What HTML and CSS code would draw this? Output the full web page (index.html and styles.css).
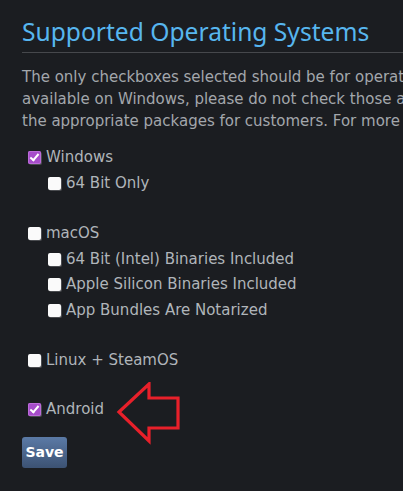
FILE: index.html
```html
<!DOCTYPE html>
<html lang="en">
<head>
    <meta charset="UTF-8">
    <meta name="viewport" content="width=device-width, initial-scale=1.0">
    <title>Supported Operating Systems</title>
    <link rel="stylesheet" href="styles.css">
</head>
<body>
    <div class="section">
        <h1>Supported Operating Systems</h1>
        <p class="intro">
            The only checkboxes selected should be for operating systems your product fully supports. If features are not<br>
            available on Windows, please do not check those additional platforms. This helps Steam deliver<br>
            the appropriate packages for customers. For more information, see the documentation.
        </p>

        <form class="os-list">
            <div class="os-group">
                <label class="check"><input type="checkbox" checked> Windows</label>
                <label class="check sub"><input type="checkbox"> 64 Bit Only</label>
            </div>
            <div class="os-group">
                <label class="check"><input type="checkbox"> macOS</label>
                <label class="check sub"><input type="checkbox"> 64 Bit (Intel) Binaries Included</label>
                <label class="check sub"><input type="checkbox"> Apple Silicon Binaries Included</label>
                <label class="check sub"><input type="checkbox"> App Bundles Are Notarized</label>
            </div>
            <div class="os-group linux">
                <label class="check"><input type="checkbox"> Linux + SteamOS</label>
            </div>
            <div class="os-group last">
                <label class="check"><input type="checkbox" checked> Android</label>
                <svg class="arrow" width="66" height="64" viewBox="0 0 66 64">
                    <polygon points="3,30 33,2 33,16 62,16 62,46 33,46 33,59" fill="none" stroke="#e8202a" stroke-width="3.2" stroke-linejoin="miter"/>
                </svg>
            </div>
            <button type="button" class="save">Save</button>
        </form>
    </div>
</body>
</html>
```
FILE: styles.css
```css
* {
    margin: 0;
    padding: 0;
    box-sizing: border-box;
}
html, body {
    overflow: hidden;
}
body {
    font-family: 'DejaVu Sans', sans-serif;
    background: #1b1d21;
    color: #a3a7ac;
    width: 403px;
    height: 491px;
}
.section {
    width: 900px;
    padding: 17.5px 0 0 22px;
}
h1 {
    font-family: 'Noto Sans', sans-serif;
    font-weight: normal;
    font-size: 24.6px;
    line-height: 27px;
    color: #57b6ef;
    padding-bottom: 7.5px;
    border-bottom: 1px solid #46484c;
    margin-bottom: 14.3px;
}
.intro {
    font-size: 15px;
    line-height: 21.7px;
    white-space: nowrap;
    margin-bottom: 12px;
}
.os-group {
    display: flex;
    flex-direction: column;
    padding-left: 6px;
    margin-bottom: 25px;
}
.os-group.linux {
    margin-bottom: 23.5px;
}
.os-group.last {
    position: relative;
    margin-bottom: 15px;
}
.check {
    display: flex;
    align-items: center;
    gap: 5px;
    height: 25.5px;
    font-size: 15px;
    color: #b0b5ba;
}
.check.sub {
    padding-left: 20px;
}
.check input {
    appearance: none;
    -webkit-appearance: none;
    width: 13px;
    height: 13px;
    margin-top: 1px;
    background: #fafafa;
    border-radius: 2px;
    box-shadow: 1px 1px 0 #4a4c50;
    position: relative;
    flex: none;
}
.check input:checked {
    background: #a64dca;
    box-shadow: 1px 1px 0 #4a4c50, inset 0 0 0 1px #bb6bd9;
}
.check input:checked::after {
    content: "";
    position: absolute;
    left: 4px;
    top: 1px;
    width: 3px;
    height: 7px;
    border: solid #fff;
    border-width: 0 2px 2px 0;
    transform: rotate(40deg);
}
.arrow {
    position: absolute;
    left: 94px;
    top: -14px;
}
.save {
    font-family: 'DejaVu Sans', sans-serif;
    font-weight: bold;
    font-size: 14px;
    color: #fff;
    width: 45px;
    height: 31px;
    border: none;
    border-radius: 3px;
    background: linear-gradient(to bottom, #5b7aa6, #3c5273);
    cursor: pointer;
}
```
